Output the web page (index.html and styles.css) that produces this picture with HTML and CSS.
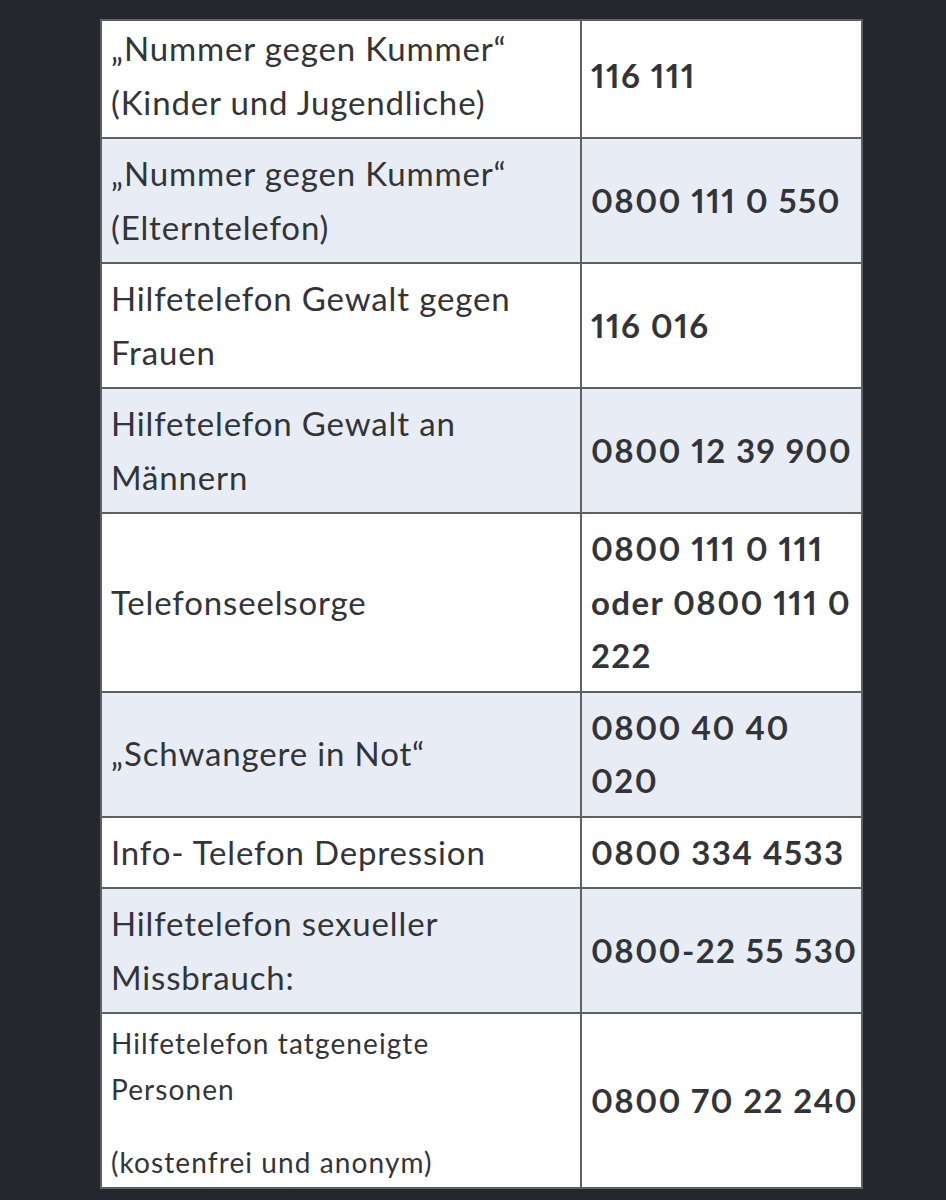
FILE: index.html
```html
<!DOCTYPE html>
<html lang="de">
<head>
<meta charset="utf-8">
<title>Hilfetelefone</title>
<link rel="stylesheet" href="styles.css">
</head>
<body>
<main class="page">
  <table class="hotlines">
    <colgroup>
      <col class="col-name">
      <col class="col-number">
    </colgroup>
    <tbody>
      <tr class="row row-first">
        <td class="name">„Nummer gegen Kummer“<br>(Kinder und Jugendliche)</td>
        <td class="number">116 111</td>
      </tr>
      <tr class="row row-alt">
        <td class="name">„Nummer gegen Kummer“<br>(Elterntelefon)</td>
        <td class="number">0800 111 0 550</td>
      </tr>
      <tr class="row">
        <td class="name">Hilfetelefon Gewalt gegen<br>Frauen</td>
        <td class="number">116 016</td>
      </tr>
      <tr class="row row-alt">
        <td class="name">Hilfetelefon Gewalt an<br>Männern</td>
        <td class="number">0800 12 39 900</td>
      </tr>
      <tr class="row">
        <td class="name">Telefonseelsorge</td>
        <td class="number">0800 111 0 111<br>oder 0800 111 0<br>222</td>
      </tr>
      <tr class="row row-alt">
        <td class="name">„Schwangere in Not“</td>
        <td class="number">0800 40 40<br>020</td>
      </tr>
      <tr class="row">
        <td class="name">Info- Telefon Depression</td>
        <td class="number">0800 334 4533</td>
      </tr>
      <tr class="row row-alt">
        <td class="name">Hilfetelefon sexueller<br>Missbrauch:</td>
        <td class="number">0800-22 55 530</td>
      </tr>
      <tr class="row">
        <td class="name name-small">
          <p class="small-line">Hilfetelefon tatgeneigte<br>Personen</p>
          <p class="small-line small-note">(kostenfrei und anonym)</p>
        </td>
        <td class="number">0800 70 22 240</td>
      </tr>
    </tbody>
  </table>
</main>
</body>
</html>
```

FILE: styles.css
```css
html, body {
  margin: 0;
  padding: 0;
  background: #25272e;
}

body {
  width: 946px;
  height: 1200px;
  overflow: hidden;
  font-family: Lato, "Open Sans", "Liberation Sans", sans-serif;
  color: #333438;
}

.page {
  padding: 19px 0 0 100px;
}

.hotlines {
  width: 761px;
  border-collapse: collapse;
  table-layout: fixed;
  background: #ffffff;
}

.col-name {
  width: 480px;
}

.col-number {
  width: 281px;
}

.hotlines td {
  border: 2px solid #5f6063;
  padding: 8px 0 8px 9px;
  font-size: 33px;
  line-height: 53.5px;
  letter-spacing: 0.85px;
  vertical-align: middle;
  white-space: nowrap;
}

.row-first td {
  padding-top: 1px;
}

.row-alt td {
  background: #e8edf5;
}

.hotlines td.number {
  font-weight: 700;
  padding-left: 9px;
  font-variant-numeric: proportional-nums;
  letter-spacing: 1.4px;
}

.hotlines td.name-small {
  font-size: 28px;
  line-height: 46px;
  letter-spacing: 1.1px;
  padding-top: 6px;
  padding-bottom: 2px;
}

.small-line {
  margin: 0;
}

.small-note {
  margin-top: 27px;
}
```
